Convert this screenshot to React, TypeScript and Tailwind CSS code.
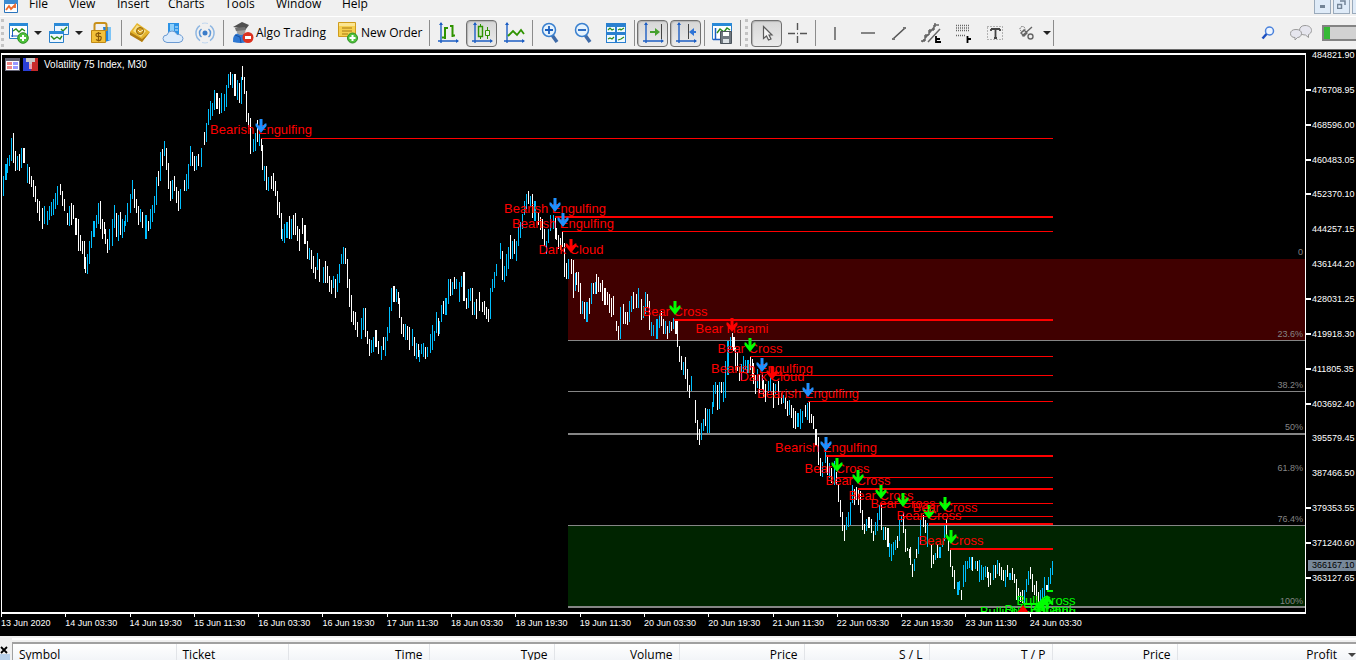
import type { ReactNode } from "react";

const UI = "font-['Open_Sans','Noto_Sans',sans-serif]";
const CHART_FONT = "font-['Liberation_Sans',Arial,sans-serif]";

/* ---------- chart data ---------- */

// Each bar: x, kind (b rising, w falling; capitals are double width), high-low.
const BARS = `
3b176-196 5B164-180 7b158-173 9b155-166 11b138-161 13w133-163 15w151-171 17b156-170 19w154-171 21b148-168 23W148-163
27b164-183 29w167-184 31w176-187 33w180-197 35w186-202 37w199-213 39w201-221 42w208-229 44b206-224 47b211-225 49b206-220
51b202-216 53b199-215 55b193-209 57b186-205 60w184-195 62w191-206 64w199-211 67w213-225 69b206-226 71w203-225 73w205-219
75W218-235 78w219-251 80w235-251 82w241-254 84w241-269 85w257-273 87b254-274 89b241-264 91b231-248 93B221-237 96b215-228
98b203-224 100w201-229 102w219-239 104w222-234 105w229-244 107w239-253 109b229-250 112b219-246 114b205-228 116w213-237
118b215-241 120w212-235 122b219-238 124b221-232 125b215-226 127b203-222 130b194-213 132b180-199 134w189-208 136w199-213
138w206-225 140b209-222 142w212-228 145B215-239 148w221-231 150b209-229 152b205-222 154b196-213 156b177-205 158w171-186
160b152-181 162w149-166 164b141-156 166w148-170 168w163-189 170w181-201 172b180-199 174w176-191 176w187-203 178w191-211
180b189-209 184w180-191 186b174-191 188b164-189 190b146-166 192w152-166 194w156-171 196b156-170 198w154-166 201b148-167
204w132-145 206b123-142 208b109-125 210b101-120 212b103-116 214b90-110 216W93-109 219w98-114 221b93-113 224b94-111
226b85-107 228b74-88 230w72-85 232b74-88 234W74-96 237b80-100 239w83-103 241b77-104 242w66-80 244w77-94 246w91-122
248w113-127 250w118-154 253b139-152 255b133-151 257w120-142 259b133-146 261w139-151 262w145-170 264b166-181 266w166-190
268b177-191 271w176-189 273w173-191 275w181-196 277w191-215 279w202-218 281w213-239 282b229-241 284b224-243 286B222-238
289w216-239 291b219-239 293w215-235 295w213-235 297w226-241 299w229-251 302w218-234 304W225-244 307w241-259 309b248-260
311w250-269 313w256-273 315w267-279 317b253-270 319w259-282 323b267-283 325w261-283 327w266-283 329w276-292 331w280-294
333b276-288 335w279-298 337b274-292 339b264-283 341b254-264 343b247-264 345w248-264 347w259-288 349w279-307 351w295-322
353w311-325 355w312-330 357w322-337 361b318-339 363b308-330 365w308-337 367w331-344 369w339-356 371b340-353 373b337-352
375W330-347 378w341-354 381b346-360 383w337-350 385b337-356 387b327-341 389b307-333 391b288-311 393W286-302 396b289-302
398w292-304 399w298-318 401w317-334 403w324-337 405b324-340 407w326-340 409w327-350 412b329-346 414w337-356 416b343-359
418w344-357 419b350-362 421b344-354 423b343-357 425w347-359 427b347-357 430b334-353 432b325-350 434b331-341 436b312-333
438w318-336 439b321-334 441b305-322 443w301-314 445B298-315 448b279-304 450w279-296 452b282-295 454w277-289 456b279-289
459b282-302 461b276-287 463W272-301 466w298-309 468b289-308 470b288-301 472w288-315 474b302-315 476w299-319 479w292-311
482w302-312 484w301-315 486w307-319 488w309-322 490b288-319 492b279-292 494b272-288 496b264-276 500b243-259 502w251-280
504b266-282 506b254-276 508b247-269 510w235-259 512b241-259 514w239-254 516b241-261 518b227-246 520b222-238 522b214-229
524b201-215 526b194-209 528w191-204 530b196-206 532w194-218 534B201-221 538w213-225 540w217-230 542w219-239 544w229-246
546b241-254 548b229-243 550b215-231 553b215-229 555w218-239 556w228-240 558w235-249 560w238-250 562w232-247 564w243-277
566w263-279 568b259-279 571w259-274 573w260-298 575b273-291 576w272-285 578w272-292 580w283-314 582b301-314 584w302-319
586B302-322 589w298-314 591b283-304 593w283-294 595b282-294 596w274-294 598w277-292 600w283-292 602w280-301 604W288-305
607w292-305 609w294-313 611w298-317 613w296-315 616w321-331 618w326-340 620b307-339 623w304-324 625w312-324 627w312-325
629b301-322 631b296-312 633w292-309 636w294-308 638b288-308 641w299-320 643b306-318 645b292-314 647w294-307 649w301-330
651b322-336 653b325-336 656B319-339 659b314-328 661w311-326 663w319-334 665b321-334 667w326-339 669b321-333 671w322-331
673b318-329 675W320-334 677w320-347 679w346-362 681w356-370 683b362-375 685w357-379 687w369-391 689w385-398 691b376-391
695w400-423 697w420-440 699w429-445 701b423-440 703b419-431 705w408-426 707b409-433 709b409-433 712b402-414 713b385-407
715b382-394 717w385-410 719b382-409 721w382-393 723b382-402 725b361-398 727B341-375 730b337-350 732w333-347 733W337-351
735w347-370 737w352-371 739w367-381 741b364-380 743b356-373 745b360-370 747B360-373 750w357-370 752w359-378 753w363-384
755w375-394 757b369-388 759w375-394 762w375-389 763w380-397 765w384-402 768b381-393 770b375-392 773w383-408 775b384-394
778w381-405 781w393-404 783b395-403 785w397-409 787w401-416 789b400-415 791w405-418 793w408-428 795w411-429 797B413-427
800b409-429 802b411-423 805w405-417 807b403-420 809w402-423 811w414-423 813w416-429 815W429-445 818w437-465 820w458-476
822b462-477 825b448-463 827w455-475 829b463-478 831w468-483 834b461-485 836w472-485 838w484-502 840w500-517 842w512-531
844w525-541 846b517-530 848b512-527 850b502-525 852b485-503 854w489-505 856w487-500 858w489-505 860w491-513 862w510-530
864w524-534 866b519-531 868W517-528 871w519-533 873w531-541 875b522-535 877b513-531 879b505-520 881w505-530 883b527-540
885w527-540 887W528-547 889b543-557 891b544-561 893b542-555 895b540-550 897w536-548 899b520-541 901b515-522 903w513-533
905w529-552 907w548-551 909w549-558 910w547-565 912w564-577 914b559-571 916w549-558 918b537-554 920b518-545 923w515-527
925w520-533 927b523-547 931w545-568 933w555-564 935b553-560 937w544-558 939B547-558 942b541-547 944b524-541 946w519-535
948w540-551 950w550-567 952w566-577 954w570-589 957B582-595 959b581-590 961w590-600 963b565-587 965b561-582 967b561-569
969b557-568 971b557-570 972w557-571 975b561-569 977w561-571 979b560-582 981b565-580 983b567-580 985b566-577 987w567-578
988w572-587 990w573-585 993b565-580 995w565-578 997b560-574 999w563-576 1001w567-580 1003w570-581 1005b570-587
1007w565-577 1009B573-580 1012w568-580 1014w574-583 1016w579-600 1018w588-600 1020w592-602 1022w590-603 1024b590-605
1026b579-592 1028b571-585 1030w567-579 1032w574-592 1034w585-595 1036w581-600 1038w592-605 1040b590-605 1042b588-602
1044b577-598 1046W585-590 1048b577-590 1050b568-584 1052b561-575`
  .trim()
  .split(/\s+/)
  .map((entry) => {
    const [, x, kind, high, low] = entry.match(/^(\d+)([bwBW])(\d+)-(\d+)$/)!;
    return {
      x: Number(x),
      high: Number(high),
      low: Number(low),
      width: kind === "B" || kind === "W" ? 2 : 1,
      fill: kind.toLowerCase() === "b" ? "#00bfff" : "#ffffff",
    };
  });

const BLUE = "#1e90ff";
const GREEN = "#00ff00";
const RED = "#ff0000";

type Signal = { name: string; x: number; y: number; color: string };

// x is the arrow's centre, y the label's baseline.
const SIGNALS: Signal[] = [
  { name: "Bearish Engulfing", x: 261, y: 134, color: BLUE },
  { name: "Bearish Engulfing", x: 555, y: 213, color: BLUE },
  { name: "Bearish Engulfing", x: 563, y: 228, color: BLUE },
  { name: "Dark Cloud", x: 571, y: 254, color: RED },
  { name: "Bear Cross", x: 675, y: 316, color: GREEN },
  { name: "Bear Harami", x: 732, y: 333, color: RED },
  { name: "Bear Cross", x: 750, y: 353, color: GREEN },
  { name: "Bearish Engulfing", x: 762, y: 373, color: BLUE },
  { name: "Dark Cloud", x: 772, y: 381, color: RED },
  { name: "Bearish Engulfing", x: 808, y: 398, color: BLUE },
  { name: "Bearish Engulfing", x: 826, y: 452, color: BLUE },
  { name: "Bear Cross", x: 837, y: 473, color: GREEN },
  { name: "Bear Cross", x: 858, y: 485, color: GREEN },
  { name: "Bear Cross", x: 881, y: 500, color: GREEN },
  { name: "Bear Cross", x: 903, y: 508, color: GREEN },
  { name: "Bear Cross", x: 929, y: 520, color: GREEN },
  { name: "Bear Cross", x: 945, y: 512, color: GREEN },
  { name: "Bear Cross", x: 951, y: 545, color: GREEN },
];

// [start x, y, thickness]
const LEVELS = [
  [261, 138, 1], [555, 216, 2], [562, 231, 1], [674, 319, 2], [750, 356, 1], [772, 375, 1], [808, 401, 1],
  [826, 455, 2], [837, 477, 1], [858, 488, 2], [880, 503, 1], [903, 516, 1], [929, 523, 2], [950, 548, 2],
];

// [label, baseline, line y, thickness]
const FIBS: [string, number, number, number][] = [
  ["0", 255, 0, 0],
  ["23.6%", 337, 340, 1],
  ["38.2%", 388, 391, 1],
  ["50%", 430, 433, 2],
  ["61.8%", 471, 0, 0],
  ["76.4%", 522, 525, 1],
  ["100%", 604, 606, 2],
];

const PRICES: [string, boolean][] = [
  ["484821.90", false], ["476708.95", true], ["468596.00", true], ["460483.05", true], ["452370.10", true],
  ["444257.15", false], ["436144.20", false], ["428031.25", true], ["419918.30", true], ["411805.35", true],
  ["403692.40", true], ["395579.45", false], ["387466.50", false], ["379353.55", true], ["371240.60", true],
  ["363127.65", true],
];

const TIMES = [
  "13 Jun 2020", "14 Jun 03:30", "14 Jun 19:30", "15 Jun 11:30", "16 Jun 03:30", "16 Jun 19:30", "17 Jun 11:30",
  "18 Jun 03:30", "18 Jun 19:30", "19 Jun 11:30", "20 Jun 03:30", "20 Jun 19:30", "21 Jun 11:30", "22 Jun 03:30",
  "22 Jun 19:30", "23 Jun 11:30", "24 Jun 03:30",
];

/* ---------- toolbar parts ---------- */

function Icon({ children }: { children: ReactNode }) {
  return (
    <svg viewBox="0 0 22 22" className="size-[22px] shrink-0" fill="none" aria-hidden="true">
      {children}
    </svg>
  );
}

function Tool({ label, width = "w-8", children }: { label: string; width?: string; children: ReactNode }) {
  return (
    <button type="button" aria-label={label} className={`flex h-7 shrink-0 items-center justify-center ${width}`}>
      <Icon>{children}</Icon>
    </button>
  );
}

function Pressed({ label, children }: { label: string; children: ReactNode }) {
  return (
    <button
      type="button"
      aria-label={label}
      aria-pressed="true"
      className="mx-px flex h-[27px] w-[31px] shrink-0 items-center justify-center rounded-sm border border-[#707070] bg-linear-to-b from-[#d6d6d6] to-[#ebebeb] shadow-[inset_1px_1px_1px_#b4b4b4]"
    >
      <Icon>{children}</Icon>
    </button>
  );
}

function Caret({ label }: { label: string }) {
  return (
    <button type="button" aria-label={label} className="flex h-7 w-2 shrink-0 items-center justify-center">
      <svg viewBox="0 0 8 4" className="h-1 w-2" aria-hidden="true">
        <path d="M0 0h8L4 4z" fill="#222" />
      </svg>
    </button>
  );
}

const Sep = () => <span className="flex h-[26px] w-1 shrink-0 justify-center"><span className="w-px bg-[#8c8c8c]" /></span>;

const Grip = ({ width }: { width: string }) => (
  <span className={`flex h-7 shrink-0 justify-center ${width}`}>
    <span className="w-[3px] border-l-[3px] border-dotted border-[#c4c4c4]" />
  </span>
);

const Axes = () => (
  <g>
    <path d="M4 1v20M1 19h20" stroke="#1e5fc4" strokeWidth="1.4" />
    <path d="M2 3l2-3 2 3zM19 17l3 2-3 2z" fill="#1e5fc4" />
  </g>
);

function Toolbar() {
  return (
    <div role="toolbar" aria-label="Main toolbar" className="flex h-[34px] items-center overflow-hidden border-t border-b border-t-white border-b-[#6a6a6a] bg-[#f0f0f0]">
      <Grip width="w-1" />
      <Tool label="New chart" width="w-[30px]">
        <path d="M1.500 1.500h18v15h-18z" fill="#fff" stroke="#2a7fc8" />
        <path d="M1 1h19v3H1z" fill="#2a8ad8" />
        <path d="M4.500 6v9M3 14h9" stroke="#1e5fc4" />
        <path d="M5 9l3-2 3 3 3-3 3 2" stroke="#2a8c1c" strokeWidth="1.400" />
        <circle cx="15" cy="16" r="5.300" fill="#4fc23c" stroke="#2c8f22" />
        <path d="M15 13v6M12 16h6" stroke="#fff" strokeWidth="2" />
      </Tool>
      <Caret label="New chart options" />
      <Tool label="Profiles" width="w-[33px]">
        <path d="M6.500 1.500h14v11h-14z" fill="#eef7ff" stroke="#2a7fc8" />
        <path d="M6 1h15v3H6z" fill="#2a8ad8" />
        <path d="M13 7l2 2 4-4" stroke="#2a8c1c" strokeWidth="1.400" />
        <path d="M1.500 9.500h14v11h-14z" fill="#eef7ff" stroke="#2a7fc8" />
        <path d="M1 9h15v3H1z" fill="#2a8ad8" />
        <path d="M3 14l3 3 3-2 3 2 2-3" stroke="#2a8c1c" strokeWidth="1.400" />
      </Tool>
      <Caret label="Profiles options" />
      <Tool label="Market watch" width="w-9">
        <path d="M13 5h8v13l-6 2z" fill="#1f83dd" />
        <path d="M18 5h3v13h-3z" fill="#7cc4f6" />
        <path d="M4.500 9V3q0-2 2-2h8q2 0 2 2v6" stroke="#c8901a" strokeWidth="2" />
        <path d="M1.500 8.500h14v12h-14z" fill="#f2c13a" stroke="#c08a16" />
        <path d="M11 11.500q-5-1-5 1.200t3 1.800 2 2.500-5 .5M8.500 10v9.500" stroke="#8a5a08" strokeWidth="1.200" />
      </Tool>
      <Sep />
      <Tool label="Navigator" width="w-[34px]">
        <path d="M1 10L8 1l13 9-8 10z" fill="#e5b52e" />
        <path d="M1 10l12 7 8-7-8 10L1 13z" fill="#b07c12" />
        <path d="M4 9l4-6 9 6-5 6z" fill="#f8e08a" />
        <circle cx="11" cy="9" r="3.500" fill="#d9a321" stroke="#8e6410" />
        <path d="M9 8l2 2 3-2" stroke="#fff6cf" />
      </Tool>
      <Tool label="Cloud storage">
        <path d="M6 1h11v12H6z" fill="#2c93e6" />
        <path d="M8 2h4v10H8z" fill="#8ed0fb" />
        <path d="M13 5h3M13 8h3" stroke="#d5eefe" />
        <path d="M5 20.500q-4-.5-4-4t4-3.500q1-4 5-4 3.500 0 5 3.500 5-.5 6 4 0 3.500-4 4z" fill="#dcebfb" stroke="#6c9bd2" />
      </Tool>
      <Tool label="Signals">
        <circle cx="11" cy="11" r="2.500" fill="#3b7cc8" />
        <path d="M7.500 15a5 5 0 0 1 0-8M14.500 7a5 5 0 0 1 0 8" stroke="#5e97d6" strokeWidth="1.500" />
        <path d="M6 18.500a9 9 0 0 1 0-15M16 3.500a9 9 0 0 1 0 15" stroke="#8fb7e2" strokeWidth="1.500" />
        <path d="M8 20.500a10 10 0 0 0 6 0M8 1.500a10 10 0 0 1 6 0" stroke="#c1d7ef" />
      </Tool>
      <Sep />
      <button type="button" className="flex h-7 w-[110px] shrink-0 items-center gap-0.5 pl-[7px] text-[12px] whitespace-nowrap">
        <Icon>
          <path d="M1 20q-1-8 6-9l5 1 3 8q-6 2-14 0z" fill="#2f78d2" />
          <circle cx="9" cy="8.500" r="4.500" fill="#a0a0a0" />
          <path d="M1 5l9-5 7 3-3 4z" fill="#505050" />
          <path d="M3 6l10-1 1 3-10 1z" fill="#707070" />
          <path d="M3 13l5 2 1 6" stroke="#174f9e" />
          <circle cx="16" cy="15.500" r="5.500" fill="#dc3220" />
          <path d="M13 14h6v3h-6z" fill="#fff" />
        </Icon>
        Algo Trading
      </button>
      <button type="button" className="flex h-7 w-[92px] shrink-0 items-center gap-px pl-[3px] text-[12px] whitespace-nowrap">
        <Icon>
          <path d="M.5 .5h17v14h-17z" fill="#f6cf4e" stroke="#cf9c1c" />
          <path d="M1 1h16v3H1z" fill="#fbe592" />
          <path d="M4 6h10M4 9h10M4 12h6" stroke="#a87810" />
          <circle cx="14.500" cy="16" r="5" fill="#4fc23c" stroke="#2c8f22" />
          <path d="M14.500 13v6M11.500 16h6" stroke="#fff" strokeWidth="2" />
        </Icon>
        New Order
      </button>
      <Sep />
      <Tool label="Bar chart" width="w-[34px]">
        <Axes />
        <path d="M8 5v12M5 15.500h3M8 6h3M15.500 3v12M13 4h3M15 13.500h3" stroke="#2f9300" strokeWidth="2" />
      </Tool>
      <Pressed label="Candlesticks">
        <Axes />
        <path d="M9.500 2v15M16.500 5v12" stroke="#2f9300" />
        <path d="M7.500 4.500h4v10h-4z" fill="#cfe8c2" stroke="#2f9300" strokeWidth="1.400" />
        <path d="M14.500 8.500h4v5h-4z" fill="#e8f3e2" stroke="#2f9300" />
      </Pressed>
      <Tool label="Line chart">
        <Axes />
        <path d="M5 14l5-5 4 4 4-5 3 4" stroke="#2f9300" strokeWidth="1.800" />
      </Tool>
      <Sep />
      <Tool label="Zoom in">
        <path d="M13 13l5 7" stroke="#3f6ba8" strokeWidth="3.500" />
        <circle cx="10" cy="8" r="6.500" fill="#e6f3fd" stroke="#3a80cf" strokeWidth="1.500" />
        <path d="M10 4v8M6 8h8" stroke="#1a5fbe" strokeWidth="1.800" />
      </Tool>
      <Tool label="Zoom out" width="w-[34px]">
        <path d="M13 13l5 7" stroke="#3f6ba8" strokeWidth="3.500" />
        <circle cx="10" cy="8" r="6.500" fill="#e6f3fd" stroke="#3a80cf" strokeWidth="1.500" />
        <path d="M6 8h8" stroke="#1a5fbe" strokeWidth="1.800" />
      </Tool>
      <Tool label="Tile windows">
        <path d="M1 1h20v20H1z" fill="#2a80d0" />
        <path d="M2 5h8v5H2zM12 5h8v5h-8zM2 13h8v7H2zM12 13h8v7h-8z" fill="#f0f9ff" />
        <path d="M3 8l2-2 2 2 2-1M13 8l2-1 1 1 3-2M3 17l2-1 2 1 2-2M13 18l3-1 3-2" stroke="#2a8c1c" strokeWidth="1.200" />
      </Tool>
      <Sep />
      <Pressed label="Scroll to end">
        <Axes />
        <path d="M19.500 2v15" stroke="#444" />
        <path d="M8 10h6" stroke="#45a02c" strokeWidth="2" />
        <path d="M13 6l5 4-5 4z" fill="#45a02c" />
      </Pressed>
      <Pressed label="Chart shift">
        <Axes />
        <path d="M13.500 2v15" stroke="#444" />
        <path d="M18 10h3" stroke="#2f74d6" strokeWidth="2" />
        <path d="M19 6l-5 4 5 4z" fill="#2f74d6" />
      </Pressed>
      <Sep />
      <Tool label="Templates">
        <path d="M1.500 1.500h19v16h-19z" fill="#fff" stroke="#2a7fc8" />
        <path d="M1 1h20v3H1z" fill="#2a8ad8" />
        <path d="M4.500 6v12M2 17.500h7" stroke="#1e5fc4" strokeWidth="1.500" />
        <path d="M6 11l3-4 4 3 3-4 3 2" stroke="#2a8c1c" strokeWidth="1.400" />
        <path d="M9.500 9.500h11v12h-11z" fill="#707880" stroke="#4c545c" />
        <path d="M12 10h6v4h-6z" fill="#fff" />
        <path d="M12 17h6v4h-6z" fill="#dce2e6" />
      </Tool>
      <Sep />
      <Grip width="w-2" />
      <Pressed label="Cursor">
        <path d="M7.500 4.500v12l3-2.500 2 4 2.500-1-2-4h3z" fill="#f4f4f4" stroke="#5a5a5a" strokeWidth="1.200" />
      </Pressed>
      <Tool label="Crosshair" width="w-[30px]">
        <path d="M10.500 1v7M10.500 14v7M1 11.500h7M13 11.500h7M10 11.500h1" stroke="#555" strokeWidth="1.400" />
      </Tool>
      <Sep />
      <Tool label="Vertical line" width="w-9">
        <path d="M11 5v13" stroke="#555" strokeWidth="1.400" />
      </Tool>
      <Tool label="Horizontal line" width="w-[30px]">
        <path d="M4 11h14" stroke="#555" strokeWidth="1.400" />
      </Tool>
      <Tool label="Trendline">
        <path d="M5 17L17 6" stroke="#555" strokeWidth="1.600" />
        <path d="M4 16h3v2H4zM15 5h3v2h-3z" fill="#777" />
      </Tool>
      <Tool label="Equidistant channel">
        <path d="M2 20L15 4M8 20L20 7M1 19h4M5 13h4M5 13v6M9 8h5M9 8v5M14 3h5M14 3v5M15 1v4" stroke="#666" strokeWidth="1.500" />
        <path d="M16 14v6h5M16 17h4" stroke="#000" strokeWidth="1.800" />
      </Tool>
      <Tool label="Fibonacci retracement">
        <path d="M4 3.500h13M4 6h13M4 8.500h13M4 13.500h10" stroke="#666" strokeWidth="1.300" strokeDasharray="1 1" />
        <path d="M15.500 14v7M15 17h4" stroke="#000" strokeWidth="1.800" />
      </Tool>
      <Tool label="Text label">
        <path d="M3.500 4.500h15v13h-15z" stroke="#777" strokeDasharray="1 2" />
        <path d="M7 7h9M11.500 7v9M7 7v2M16 7v2M10 16h3" stroke="#444" strokeWidth="1.800" />
      </Tool>
      <Tool label="Objects">
        <circle cx="6.500" cy="7" r="2.500" stroke="#666" strokeDasharray="1.500 1" />
        <path d="M6 14L16 5M5 11l3 3 3-3-3-3z" stroke="#666" strokeWidth="1.400" />
        <circle cx="14.500" cy="14.500" r="2.500" stroke="#666" strokeWidth="1.400" />
      </Tool>
      <Caret label="Objects options" />
      <Sep />
      <div className="ml-auto flex shrink-0 items-center">
        <button type="button" aria-label="Search" className="flex h-7 w-6 items-center justify-center">
          <svg viewBox="0 0 14 14" className="size-3.5" fill="none" aria-hidden="true">
            <circle cx="8.500" cy="5" r="4" fill="#eef5ff" stroke="#4a82dc" strokeWidth="1.500" />
            <path d="M5.500 8L1.500 12.500" stroke="#1c4fc0" strokeWidth="2.500" />
          </svg>
        </button>
        <button type="button" aria-label="Chat" className="flex h-7 w-[42px] items-center justify-center">
          <svg viewBox="0 0 22 16" className="h-4 w-[22px]" fill="#e6e6ee" stroke="#9a9a9a" aria-hidden="true">
            <path d="M15 .5c4 0 6.500 2 6.500 5 0 2-1.500 3.500-3 4v3l-3-2.500c-4 0-6-2-6-4.500 0-3 2-5 5.500-5z" />
            <path d="M6 4.500c3.500 0 5.500 1.500 5.500 4s-2 4-4 4L5 15v-2.500c-3 0-4.500-1.500-4.500-4 0-2.500 2-4 5.500-4z" />
          </svg>
        </button>
        <div role="progressbar" aria-label="Connection" aria-valuenow={18} className="h-4 w-[34px] border-y-2 border-l-2 border-[#838383] bg-[#d2d2d2]">
          <div className="h-full w-[18%] bg-[#35b935]" />
        </div>
      </div>
    </div>
  );
}

function MenuBar() {
  return (
    <header className="flex h-4 items-end overflow-hidden bg-[#f0f0f0] text-[12px] leading-4">
      <svg viewBox="0 0 16 16" className="mb-[3px] ml-0.5 size-4 shrink-0" fill="none" aria-hidden="true">
        <path d="M2.500 2.500h13v13h-13z" fill="#fff" stroke="#2a74bd" />
        <path d="M2 2h14v5H2z" fill="#3c8bd2" />
        <path d="M4 13l3-4 2 3 4-4v3" stroke="#ee6a2c" strokeWidth="1.800" />
      </svg>
      <nav aria-label="Menu" className="flex h-4 flex-1 -translate-y-1">
        <a href="#file" className="w-[40px] pl-[11px]">File</a>
        <a href="#view" className="w-[48px] pl-[11px]">View</a>
        <a href="#insert" className="w-[51px] pl-[11px]">Insert</a>
        <a href="#charts" className="w-[57px] pl-[11px]">Charts</a>
        <a href="#tools" className="w-[51px] pl-[11px]">Tools</a>
        <a href="#window" className="w-[66px] pl-[11px]">Window</a>
        <a href="#help" className="pl-[11px]">Help</a>
      </nav>
      <div className="flex gap-0.5 self-start">
        <button type="button" aria-label="Minimize" className="flex h-3.5 w-[17px] items-center justify-center border border-t-0 border-[#9aaabb] bg-[#dfebf8]">
          <span className="h-[3px] w-[5px] bg-[#738496]" />
        </button>
        <button type="button" aria-label="Restore" className="flex h-3.5 w-[17px] items-center justify-center border border-t-0 border-[#9aaabb] bg-[#dfebf8] pb-1">
          <svg viewBox="0 0 9 9" className="size-[9px]" fill="none" stroke="#738496" aria-hidden="true">
            <path d="M3 1h5v4M.5 4.500h4v4h-4z" strokeWidth="1.500" />
          </svg>
        </button>
        <button type="button" aria-label="Close" className="h-3.5 w-1 border-b border-l border-[#9aaabb] bg-[#dfebf8]" />
      </div>
    </header>
  );
}

/* ---------- chart ---------- */

const DownArrow = ({ x, y, color }: { x: number; y: number; color: string }) => (
  <path
    transform={`translate(${x} ${y})`}
    fill={color}
    d="M-1.500 0h3v7.500l2.500-3h1.500v2.500L1.500 12 0 14l-1.500-2-4-5V4.500H-4l2.500 3z"
  />
);

const UpArrow = ({ x, y, color }: { x: number; y: number; color: string }) => (
  <path
    transform={`translate(${x} ${y})`}
    fill={color}
    d="M0 0l1.500 2 4 5v2.500H4l-2.500-3V14h-3V6.500l-2.500 3h-1.500V7l4-5z"
  />
);

function PricePlot() {
  return (
    <svg className="block h-[557px] w-full overflow-hidden" role="img" aria-label="Volatility 75 Index price bars">
      <g transform="translate(-2 -55)" shapeRendering="crispEdges">
        <rect x="568" y="259" width="100%" height="81" fill="#400000" />
        <rect x="568" y="526" width="100%" height="80" fill="#002400" />
        {FIBS.filter((f) => f[3] > 0).map(([label, , y, h]) => (
          <rect key={label} x="568" y={y} width="100%" height={h} fill="#858585" />
        ))}
        {BARS.map((b, i) => (
          <rect key={i} x={b.x} y={b.high} width={b.width} height={b.low - b.high} fill={b.fill} />
        ))}
        {LEVELS.map(([x, y, h]) => (
          <rect key={y} x={x} y={y} width={1053 - x} height={h} fill={RED} />
        ))}
        <rect x="1024" y="603" width="22" height="2" fill={GREEN} />
        <rect x="1047" y="590" width="6" height="2" fill={GREEN} />
      </g>
      <g transform="translate(-2 -55)" className="text-[13px]" textAnchor="middle">
        {SIGNALS.map((s) => (
          <g key={`${s.x}-${s.y}`}>
            <text x={s.x} y={s.y} fill={RED}>{s.name}</text>
            <DownArrow x={s.x} y={s.y - 15} color={s.color} />
          </g>
        ))}
        <text x="1046" y="605" fill={GREEN}>Bull Cross</text>
        <text x="1028" y="616" fill={GREEN}>Bullish Engulfing</text>
        <text x="1038" y="614" fill={GREEN}>Bull Harami</text>
        <UpArrow x={1047} y={595} color={GREEN} />
        <UpArrow x={1043} y={597} color={GREEN} />
        <UpArrow x={1039} y={601} color={GREEN} />
        <UpArrow x={1023} y={605} color={RED} />
      </g>
      <g transform="translate(-2 -55)" className="text-[9px]" textAnchor="end" fill="#858585">
        {FIBS.map(([label, y]) => (
          <text key={label} x="100%" y={y}>{label}</text>
        ))}
      </g>
    </svg>
  );
}

function Chart() {
  return (
    <main className={`bg-black pb-2 text-[9px] text-white ${CHART_FONT}`}>
      <div className="flex">
        <div className="min-w-0 flex-1 pt-[3px] pl-px">
          <div className="relative border border-y-2 border-white">
            <PricePlot />
            <div className="absolute top-[3px] left-[3px] flex items-center gap-[3px]">
              <svg viewBox="0 0 15 13" className="h-[13px] w-[15px]" aria-hidden="true">
                <path d="M0 0h15v13H0z" fill="#667" />
                <path d="M1 3h13v9H1z" fill="#fff" />
                <path d="M2 4h5v3H2zM2 8h5v3H2z" fill="#e88" />
                <path d="M8 4h5v3H8zM8 8h5v3H8z" fill="#99f" />
              </svg>
              <svg viewBox="0 0 15 13" className="h-[13px] w-[15px]" aria-hidden="true">
                <path d="M0 0h8v13H0z" fill="#2a3fd8" />
                <path d="M8 0h7v13H8z" fill="#c52a2a" />
                <path d="M3 0h9v4H9v2H6V4H3z" fill="#c8c8c8" />
                <path d="M6 6h3v5H6z" fill="#e9a0b0" />
              </svg>
              <h1 className="pl-[3px] text-[10px] leading-[13px]">Volatility 75 Index, M30</h1>
            </div>
          </div>
        </div>
        <div className="relative flex h-[533px] w-[50px] shrink-0 flex-col justify-between">
          {PRICES.map(([price, tick]) => (
            <div key={price} className="flex items-center gap-px leading-[10px]">
              <span className={tick ? "h-0.5 w-[5px] shrink-0 bg-white" : "w-[5px] shrink-0"} />
              {price}
            </div>
          ))}
          <div className="absolute top-[510px] right-0 left-0.5 bg-[#778899] pl-1 leading-[11px] text-black">366167.10</div>
        </div>
      </div>
      <div className="flex w-[1094px] max-w-full pl-px leading-[10px]">
        {TIMES.map((time) => (
          <div key={time} className="flex-1 whitespace-nowrap">
            <div className="mb-px h-[3px] w-px bg-white" />
            {time}
          </div>
        ))}
      </div>
    </main>
  );
}

/* ---------- terminal ---------- */

const COLUMNS: [string, string][] = [
  ["Symbol", "w-[163px] pl-1.5 text-left"],
  ["Ticket", "w-[112px] pl-1.5 text-left"],
  ["Time", "w-[141px] pr-1.5 text-right"],
  ["Type", "w-[125px] pr-1.5 text-right"],
  ["Volume", "w-[125px] pr-1.5 text-right"],
  ["Price", "w-[125px] pr-1.5 text-right"],
  ["S / L", "w-[125px] pr-1.5 text-right"],
  ["T / P", "w-[123px] pr-1.5 text-right"],
  ["Price", "w-[125px] pr-1.5 text-right"],
];

function Terminal() {
  return (
    <section aria-label="Terminal" className="flex h-[25px] overflow-hidden bg-[#f0f0f0]">
      <div className="flex w-3 shrink-0 flex-col pt-2.5">
        <button type="button" aria-label="Close terminal" className="flex h-3 w-2">
          <svg viewBox="0 0 8 8" className="size-2" aria-hidden="true">
            <path d="M1 1l6 6M7 1L1 7" stroke="#000" strokeWidth="1.800" />
          </svg>
        </button>
        <span className="h-4 w-2.5 shrink-0 bg-[#b9d1ea]" />
      </div>
      <div className="min-w-0 flex-1 pt-0.5">
        <div className="border-t-2 border-white pt-0.5">
          <div className="border-t-2 border-l border-[#a0a0a0] bg-white">
            <table className="w-full table-fixed border-collapse text-[12px] leading-[22px]">
              <thead>
                <tr className="bg-linear-to-b from-white to-[#eef1f5]">
                  {COLUMNS.map(([name, style], i) => (
                    <th key={i} className={`border-r border-[#e2e4e8] p-0 font-normal ${style}`}>{name}</th>
                  ))}
                  <th className="p-0 font-normal">
                    <span className="flex items-center justify-end gap-[11px]">
                      Profit
                      <svg viewBox="0 0 8 4" className="h-1 w-2" aria-hidden="true">
                        <path d="M0 0h8L4 4z" fill="#444" />
                      </svg>
                    </span>
                  </th>
                </tr>
              </thead>
            </table>
          </div>
        </div>
      </div>
    </section>
  );
}

export default function App() {
  return (
    <div className={`overflow-hidden bg-[#f0f0f0] text-black ${UI}`}>
      <MenuBar />
      <Toolbar />
      <Chart />
      <Terminal />
    </div>
  );
}
